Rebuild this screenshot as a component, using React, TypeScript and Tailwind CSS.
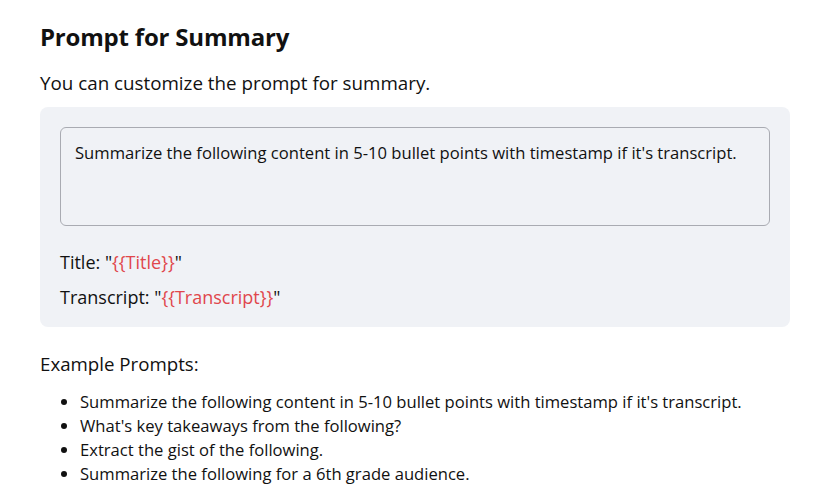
import React from 'react';

const prompts = [
  "Summarize the following content in 5-10 bullet points with timestamp if it's transcript.",
  "What's key takeaways from the following?",
  'Extract the gist of the following.',
  'Summarize the following for a 6th grade audience.',
];

export default function App() {
  return (
    <div className="min-h-screen bg-white text-[#111] px-10 pt-[20px]" style={{ fontFamily: '"Open Sans", "Noto Sans", sans-serif' }}>
      <h2 className="text-[24px] font-bold leading-[34px] tracking-[-0.2px]">Prompt for Summary</h2>
      <p className="mt-[15px] text-[18.8px] leading-[28px]">You can customize the prompt for summary.</p>

      <div className="mt-[10px] w-[750px] rounded-lg bg-[#f0f2f6] px-5 pt-5 pb-3">
        <div className="h-[99px] rounded-md border border-[#a9abb2] px-[14px] pt-[13px] text-[16.6px] leading-[24px]">
          Summarize the following content in 5-10 bullet points with timestamp if it's transcript.
        </div>
        <div className="mt-[19px] text-[18px] leading-[35px]">
          <p>
            Title: "<span className="text-[#e0474c]">{'{{Title}}'}</span>"
          </p>
          <p>
            Transcript: "<span className="text-[#e0474c]">{'{{Transcript}}'}</span>"
          </p>
        </div>
      </div>

      <p className="mt-[23px] text-[18.7px] leading-[28px]">Example Prompts:</p>
      <ul className="mt-[12px] list-disc pl-10 text-[16.6px] leading-[24px]">
        {prompts.map((p) => (
          <li key={p}>{p}</li>
        ))}
      </ul>
    </div>
  );
}
